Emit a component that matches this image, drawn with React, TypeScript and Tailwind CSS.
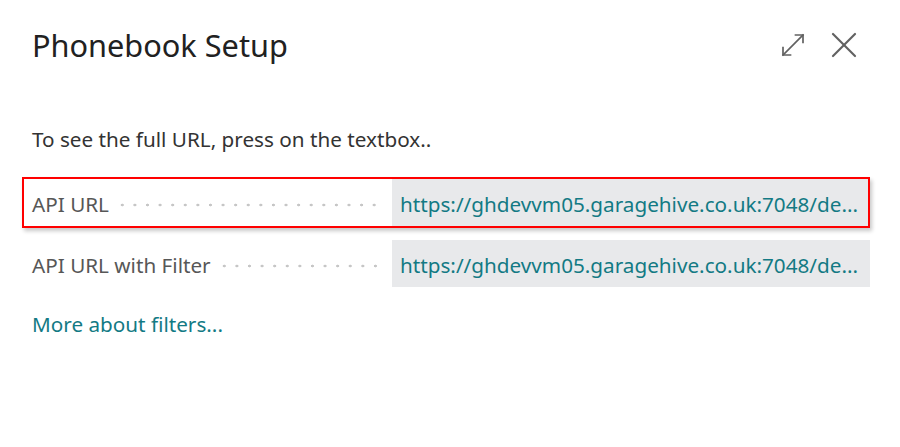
const font = { fontFamily: '"Noto Sans", "Open Sans", sans-serif' };

const ExpandIcon = () => (
  <svg width="24" height="24" viewBox="0 0 24 24" fill="none" stroke="#616161" strokeWidth="1.7" strokeLinecap="square">
    <path d="M2 22L22 2" />
    <path d="M14.5 2H22V9.5" />
    <path d="M2 14.5V22H9.5" />
  </svg>
);

const CloseIcon = () => (
  <svg width="26" height="26" viewBox="0 0 26 26" fill="none" stroke="#616161" strokeWidth="2.2" strokeLinecap="round">
    <path d="M2 2L24 24" />
    <path d="M24 2L2 24" />
  </svg>
);

type FieldRowProps = {
  label: string;
  value: string;
  focused?: boolean;
};

const FieldRow = ({ label, value, focused = false }: FieldRowProps) => (
  <div
    className={
      focused
        ? 'flex h-[51px] w-[848px] border-2 border-[#ff0000] shadow-[2px_3px_4px_rgba(0,0,0,0.22)]'
        : 'flex h-[51px] w-[848px] border-y-2 border-l-2 border-transparent'
    }
  >
    <div className="flex w-[368px] items-center pl-2 pt-[2px]">
      <span className="whitespace-nowrap text-[20.7px] leading-[28px] text-[#575757]">{label}</span>
      <span className="ml-[7px] mr-[9px] mt-[3px] h-[4px] flex-1 bg-[radial-gradient(circle,#c6c6c6_1.1px,transparent_1.7px)] bg-[length:12.6px_4px] bg-repeat-x" />
    </div>
    <div className="flex flex-1 items-center overflow-hidden bg-[#e8e9eb] px-2 pt-[2px]">
      <span className="whitespace-nowrap text-[20.7px] leading-[28px] text-[#137a84]">{value}</span>
    </div>
  </div>
);

export default function App() {
  return (
    <div className="h-[447px] w-[900px] bg-white" style={font}>
      <div className="flex items-center justify-between pt-[25px] pl-8 pr-[43px]">
        <h1 className="text-[30.7px] font-normal leading-[40px] text-[#212121]">Phonebook Setup</h1>
        <div className="flex items-center gap-[26px]">
          <ExpandIcon />
          <CloseIcon />
        </div>
      </div>

      <p className="mt-[60px] pl-8 text-[20.7px] leading-[28px] text-[#333333]">To see the full URL, press on the textbox..</p>

      <div className="ml-[22px] mt-[24px] flex flex-col gap-[10px]">
        <FieldRow label="API URL" value="https://ghdevvm05.garagehive.co.uk:7048/de..." focused />
        <FieldRow label="API URL with Filter" value="https://ghdevvm05.garagehive.co.uk:7048/de..." />
      </div>

      <a href="#" className="mt-[21px] block w-fit pl-8 text-[20.7px] leading-[28px] text-[#137a84]">
        More about filters...
      </a>
    </div>
  );
}
